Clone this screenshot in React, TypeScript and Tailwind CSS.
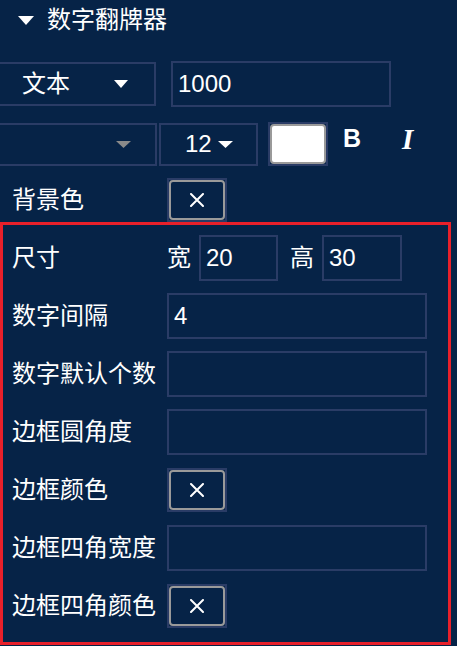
import React from 'react';

const FONT = { fontFamily: '"Liberation Sans", "Noto Sans CJK SC", sans-serif' };

const Caret = ({ className = '', color = '#ffffff', w = 14, h = 8 }: { className?: string; color?: string; w?: number; h?: number }) => (
  <svg width={w} height={h} viewBox={`0 0 ${w} ${h}`} className={className}>
    <polygon points={`0,0 ${w},0 ${w / 2},${h}`} fill={color} />
  </svg>
);

const ColorButton = () => (
  <div className="w-[60px] h-[44px] border-2 border-[#2a3c66] flex">
    <div className="flex-1 rounded-[4px] border-2 border-[#9a9a9a] flex items-center justify-center">
      <svg width="14" height="14" viewBox="0 0 14 14">
        <path d="M1 1 L13 13 M13 1 L1 13" stroke="#ffffff" strokeWidth="2" strokeLinecap="round" />
      </svg>
    </div>
  </div>
);

const Field = ({ value = '', className = 'w-[260px]' }: { value?: string; className?: string }) => (
  <div className={`${className} h-[46px] border-2 border-[#2a3c66] flex items-center pl-[5px]`}>
    {value}
  </div>
);

const Row = ({ label, children }: { label: string; children: React.ReactNode }) => (
  <div className="flex items-center h-[46px]">
    <div className="w-[155px] shrink-0 whitespace-nowrap">{label}</div>
    {children}
  </div>
);

export default function App() {
  return (
    <div className="w-[457px] h-[646px] bg-[#062347] text-white text-[24px] leading-none overflow-hidden" style={FONT}>
      {/* Header */}
      <div className="flex items-center h-[40px] pl-[18px]">
        <Caret w={16} h={9} />
        <span className="ml-[13px]">数字翻牌器</span>
      </div>

      {/* Type + text */}
      <div className="flex items-center mt-[21px] h-[46px]">
        <div className="-ml-[25px] w-[181px] h-[44px] border-2 border-[#2a3c66] flex items-center pl-[45px] shrink-0">
          <span>文本</span>
          <Caret className="ml-[44px]" w={14} h={8} />
        </div>
        <Field value="1000" className="ml-[15px] w-[220px]" />
      </div>

      {/* Font row */}
      <div className="flex items-center mt-[15px] h-[44px]">
        <div className="-ml-[25px] w-[182px] h-[43px] border-2 border-[#2a3c66] flex items-center justify-end pr-[24px] shrink-0">
          <Caret color="#8a8a8a" w={15} h={7} />
        </div>
        <div className="ml-[2px] w-[99px] h-[43px] border-2 border-[#2a3c66] flex items-center pl-[24px]">
          <span>12</span>
          <Caret className="ml-[6px]" w={15} h={7} />
        </div>
        <div className="ml-[10px] w-[60px] h-[44px] border-2 border-[#2a3c66] flex">
          <div className="flex-1 rounded-[4px] border-2 border-[#9a9a9a] bg-white" />
        </div>
        <span className="ml-[15px] mb-[12px] font-bold text-[25px]">B</span>
        <span className="ml-[41px] mb-[10px] font-bold italic text-[29px]" style={{ fontFamily: '"Liberation Serif", serif' }}>I</span>
      </div>

      {/* Background colour */}
      <div className="flex items-center mt-[12px] h-[44px] pl-[12px]">
        <div className="w-[155px]">背景色</div>
        <ColorButton />
      </div>

      {/* Highlighted section */}
      <div className="w-[451px] border-[3px] border-[#e8202a] pl-[9px] pt-[10px] pb-[13px] flex flex-col gap-[12px]">
        <Row label="尺寸">
          <span>宽</span>
          <Field value="20" className="ml-[8px] w-[79px]" />
          <span className="ml-[12px]">高</span>
          <Field value="30" className="ml-[8px] w-[80px]" />
        </Row>
        <Row label="数字间隔">
          <Field value="4" />
        </Row>
        <Row label="数字默认个数">
          <Field />
        </Row>
        <Row label="边框圆角度">
          <Field />
        </Row>
        <Row label="边框颜色">
          <ColorButton />
        </Row>
        <Row label="边框四角宽度">
          <Field />
        </Row>
        <Row label="边框四角颜色">
          <ColorButton />
        </Row>
      </div>
    </div>
  );
}
